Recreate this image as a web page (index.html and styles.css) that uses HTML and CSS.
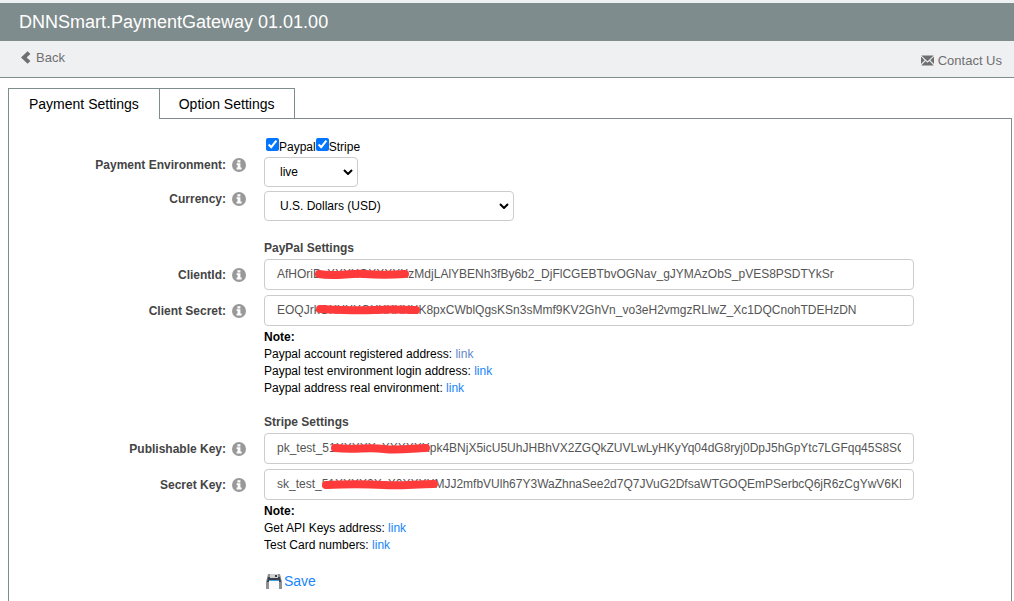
FILE: index.html
```html
<!DOCTYPE html>
<html lang="en">
<head>
    <meta charset="UTF-8">
    <meta name="viewport" content="width=device-width, initial-scale=1.0">
    <title>DNNSmart.PaymentGateway</title>
    <link rel="stylesheet" href="styles.css">
</head>
<body>
    <svg class="defs" width="0" height="0" aria-hidden="true">
        <symbol id="info" viewBox="0 0 14 14">
            <circle cx="7" cy="7" r="7" fill="#999"/>
            <path fill="#fff" d="M5.4 2.2h3v2.2h-3zM4.6 5.2h3.8v4.4h1.2v2H4.6v-2h1V7h-1z"/>
        </symbol>
    </svg>

    <header>
        <h1>DNNSmart.PaymentGateway 01.01.00</h1>
    </header>
    <nav class="toolbar">
        <a href="#" class="back">
            <svg width="10" height="13" viewBox="0 0 10 13"><path fill="#6f6f6f" d="M6.6 0.3L9.4 2.9 5.6 6.5l3.8 3.6-2.8 2.6L0 6.5z"/></svg>
            Back
        </a>
        <a href="#" class="contact">
            <svg width="13" height="11" viewBox="0 0 14 11">
                <path fill="#6f6f6f" d="M0.3 0h13.4L7 6.2zM0 1.3L4 5.2 0 9.2zM14 1.3v7.9l-4-4zM0.3 11l4.6-5L7 8l2.1-2 4.6 5z"/>
            </svg>
            Contact Us
        </a>
    </nav>

    <div class="tabs">
        <button type="button" class="tab active">Payment Settings</button>
        <button type="button" class="tab">Option Settings</button>
    </div>

    <form class="panel">
        <div class="row methods">
            <div class="field">
                <input type="checkbox" id="paypal" checked><label for="paypal">Paypal</label><input type="checkbox" id="stripe" checked><label for="stripe">Stripe</label>
            </div>
        </div>
        <div class="row top">
            <label class="name" for="environment">Payment Environment:</label>
            <svg class="info"><use href="#info"/></svg>
            <div class="field">
                <div class="select short">
                    <select id="environment"><option>live</option><option>test</option></select>
                    <svg class="arrow" viewBox="0 0 10 6"><path d="M1 1l4 4 4-4"/></svg>
                </div>
            </div>
        </div>
        <div class="row top">
            <label class="name" for="currency">Currency:</label>
            <svg class="info"><use href="#info"/></svg>
            <div class="field">
                <div class="select">
                    <select id="currency"><option>U.S. Dollars (USD)</option></select>
                    <svg class="arrow" viewBox="0 0 10 6"><path d="M1 1l4 4 4-4"/></svg>
                </div>
            </div>
        </div>

        <h2>PayPal Settings</h2>
        <div class="row">
            <label class="name" for="clientId">ClientId:</label>
            <svg class="info"><use href="#info"/></svg>
            <div class="field">
                <input type="text" id="clientId" value="AfHOriBxXXXXOXXXXXzMdjLAlYBENh3fBy6b2_DjFlCGEBTbvOGNav_gJYMAzObS_pVES8PSDTYkSr">
                <svg class="mask" viewBox="0 0 650 31"><path d="M55 15C70 18 85 14 100 15S125 16 141 15"/></svg>
            </div>
        </div>
        <div class="row">
            <label class="name" for="clientSecret">Client Secret:</label>
            <svg class="info"><use href="#info"/></svg>
            <div class="field">
                <input type="text" id="clientSecret" value="EOQJrkOXXXXOXXXXXXK8pxCWblQgsKSn3sMmf9KV2GhVn_vo3eH2vmgzRLlwZ_Xc1DQCnohTDEHzDN">
                <svg class="mask" viewBox="0 0 650 31"><path d="M56 14C75 15 90 16 110 15S140 15 152 15"/></svg>
            </div>
        </div>
        <div class="notes">
            <strong>Note:</strong>
            <p>Paypal account registered address: <a href="#" class="visited">link</a></p>
            <p>Paypal test environment login address: <a href="#">link</a></p>
            <p>Paypal address real environment: <a href="#">link</a></p>
        </div>

        <h2>Stripe Settings</h2>
        <div class="row">
            <label class="name" for="publishableKey">Publishable Key:</label>
            <svg class="info"><use href="#info"/></svg>
            <div class="field">
                <input type="text" id="publishableKey" value="pk_test_51XXXXXxXXXXXXpk4BNjX5icU5UhJHBhVX2ZGQkZUVLwLyHKyYq04dG8ryj0DpJ5hGpYtc7LGFqq45S8SCXXXX">
                <svg class="mask" viewBox="0 0 650 31"><path d="M71 15C90 17 105 14 120 16S150 15 162 15"/></svg>
            </div>
        </div>
        <div class="row">
            <label class="name" for="secretKey">Secret Key:</label>
            <svg class="info"><use href="#info"/></svg>
            <div class="field">
                <input type="text" id="secretKey" value="sk_test_51XXXX0XxX0XXXXMJJ2mfbVUlh67Y3WaZhnaSee2d7Q7JVuG2DfsaWTGOQEmPSerbcQ6jR6zCgYwV6KNXXXX">
                <svg class="mask" viewBox="0 0 650 31"><path d="M62 16C85 15 100 15 120 16S150 15 170 15"/></svg>
            </div>
        </div>
        <div class="notes">
            <strong>Note:</strong>
            <p>Get API Keys address: <a href="#">link</a></p>
            <p>Test Card numbers: <a href="#">link</a></p>
        </div>

        <a href="#" class="save">
            <svg width="16" height="15" viewBox="0 0 16 15">
                <path fill="#8d9195" d="M2 0h12l2 8v7H0V8z"/>
                <path fill="#3c4146" d="M2 3h12l1 5H1z"/>
                <path fill="#ccd0d3" d="M4 0h8v4H4z"/>
                <path fill="#3c4146" d="M9 1h2v2H9z"/>
                <path fill="#fafafa" d="M3 7h10v8H3z"/>
                <path fill="#3aa0e8" d="M3 6h10v1H3z"/>
            </svg>
            Save
        </a>
    </form>
</body>
</html>
```
FILE: styles.css
```css
* {
    box-sizing: border-box;
}
body {
    margin: 0;
    padding-top: 3px;
    min-height: 100vh;
    display: flex;
    flex-direction: column;
    background: linear-gradient(#eff0f2 3px, #fff 3px);
    font: 12px/17px "Liberation Sans", Arial, sans-serif;
    color: #000;
}
a {
    color: #1985f8;
    text-decoration: none;
}
.defs {
    position: absolute;
}
header {
    background-color: #7f8c8d;
    padding: 0 19px;
}
h1 {
    margin: 0;
    font-size: 18px;
    line-height: 38px;
    font-weight: normal;
    color: #fff;
}
.toolbar {
    display: flex;
    justify-content: space-between;
    align-items: flex-start;
    height: 37px;
    padding: 8px 12px 0 21px;
    background-color: #eff0f2;
    border-bottom: 1px solid #7f8c8d;
}
.toolbar a {
    display: flex;
    align-items: center;
    font-size: 13px;
    color: #6f6f6f;
}
.back {
    gap: 5px;
}
.toolbar .contact {
    gap: 4px;
    padding-top: 3px;
}

/* tabs */
.tabs {
    display: flex;
    margin: 10px 2px 0 8px;
}
.tab {
    height: 31px;
    padding: 0 20px 0 19px;
    border: 1px solid #7f8c8d;
    border-left: 0;
    background-color: #fff;
    font: 14px "Liberation Sans", Arial, sans-serif;
    color: #000;
}
.tab.active {
    position: relative;
    padding: 0 20px 1px;
    border-left: 1px solid #7f8c8d;
    border-bottom: 0;
}
.panel {
    flex: 1;
    margin: -1px 2px 0 8px;
    padding: 18px 0 10px;
    border: 1px solid #7f8c8d;
    border-bottom: 0;
}

/* form rows */
.row {
    display: flex;
    align-items: center;
    margin-bottom: 5px;
}
.row.top {
    align-items: flex-start;
    margin-bottom: 4px;
}
.name {
    width: 217px;
    padding-top: 2px;
    text-align: right;
    font-weight: bold;
    color: #444;
}
.top .name {
    padding-top: 0;
}
.info {
    width: 14px;
    height: 14px;
    margin: 1px 18px 0 6px;
}
.field {
    position: relative;
    flex: 0 1 650px;
}
.methods {
    height: 19px;
    margin: 0 0 1px;
    padding-left: 255px;
}
.methods .field {
    display: flex;
    align-items: center;
}
.methods label {
    padding-top: 1px;
}
.methods input {
    width: 13px;
    height: 13px;
    margin: 0 0 4px 2px;
    accent-color: #0075ff;
}
.methods label + input {
    margin-left: 0;
}
.select {
    position: relative;
    width: 250px;
}
.select.short {
    width: 94px;
}
select {
    appearance: none;
    width: 100%;
    height: 30px;
    padding: 0 15px;
    border: 1px solid #ccc;
    border-radius: 4px;
    background-color: #fff;
    font: inherit;
    color: #000;
}
.arrow {
    position: absolute;
    right: 5px;
    top: 12px;
    width: 10px;
    height: 6px;
    fill: none;
    stroke: #000;
    stroke-width: 2;
    pointer-events: none;
}
input[type="text"] {
    display: block;
    width: 100%;
    height: 31px;
    padding: 0 12px 2px;
    border: 1px solid #ccc;
    border-radius: 4px;
    font: inherit;
    color: #555;
}
.mask {
    position: absolute;
    left: 0;
    top: 0;
    width: 650px;
    height: 31px;
    fill: none;
    stroke: #ff3a3a;
    stroke-width: 8;
    stroke-linecap: round;
    pointer-events: none;
}
h2 {
    margin: 19px 0 2px 255px;
    font-size: 12px;
    line-height: 17px;
    color: #444;
}
.notes {
    margin: -2px 0 -2px 255px;
}
.notes p {
    margin: 0;
}
.notes .visited {
    color: #6188cc;
}
.save {
    display: inline-flex;
    align-items: center;
    gap: 2px;
    margin: 21px 0 0 257px;
    font-size: 14px;
}
```
